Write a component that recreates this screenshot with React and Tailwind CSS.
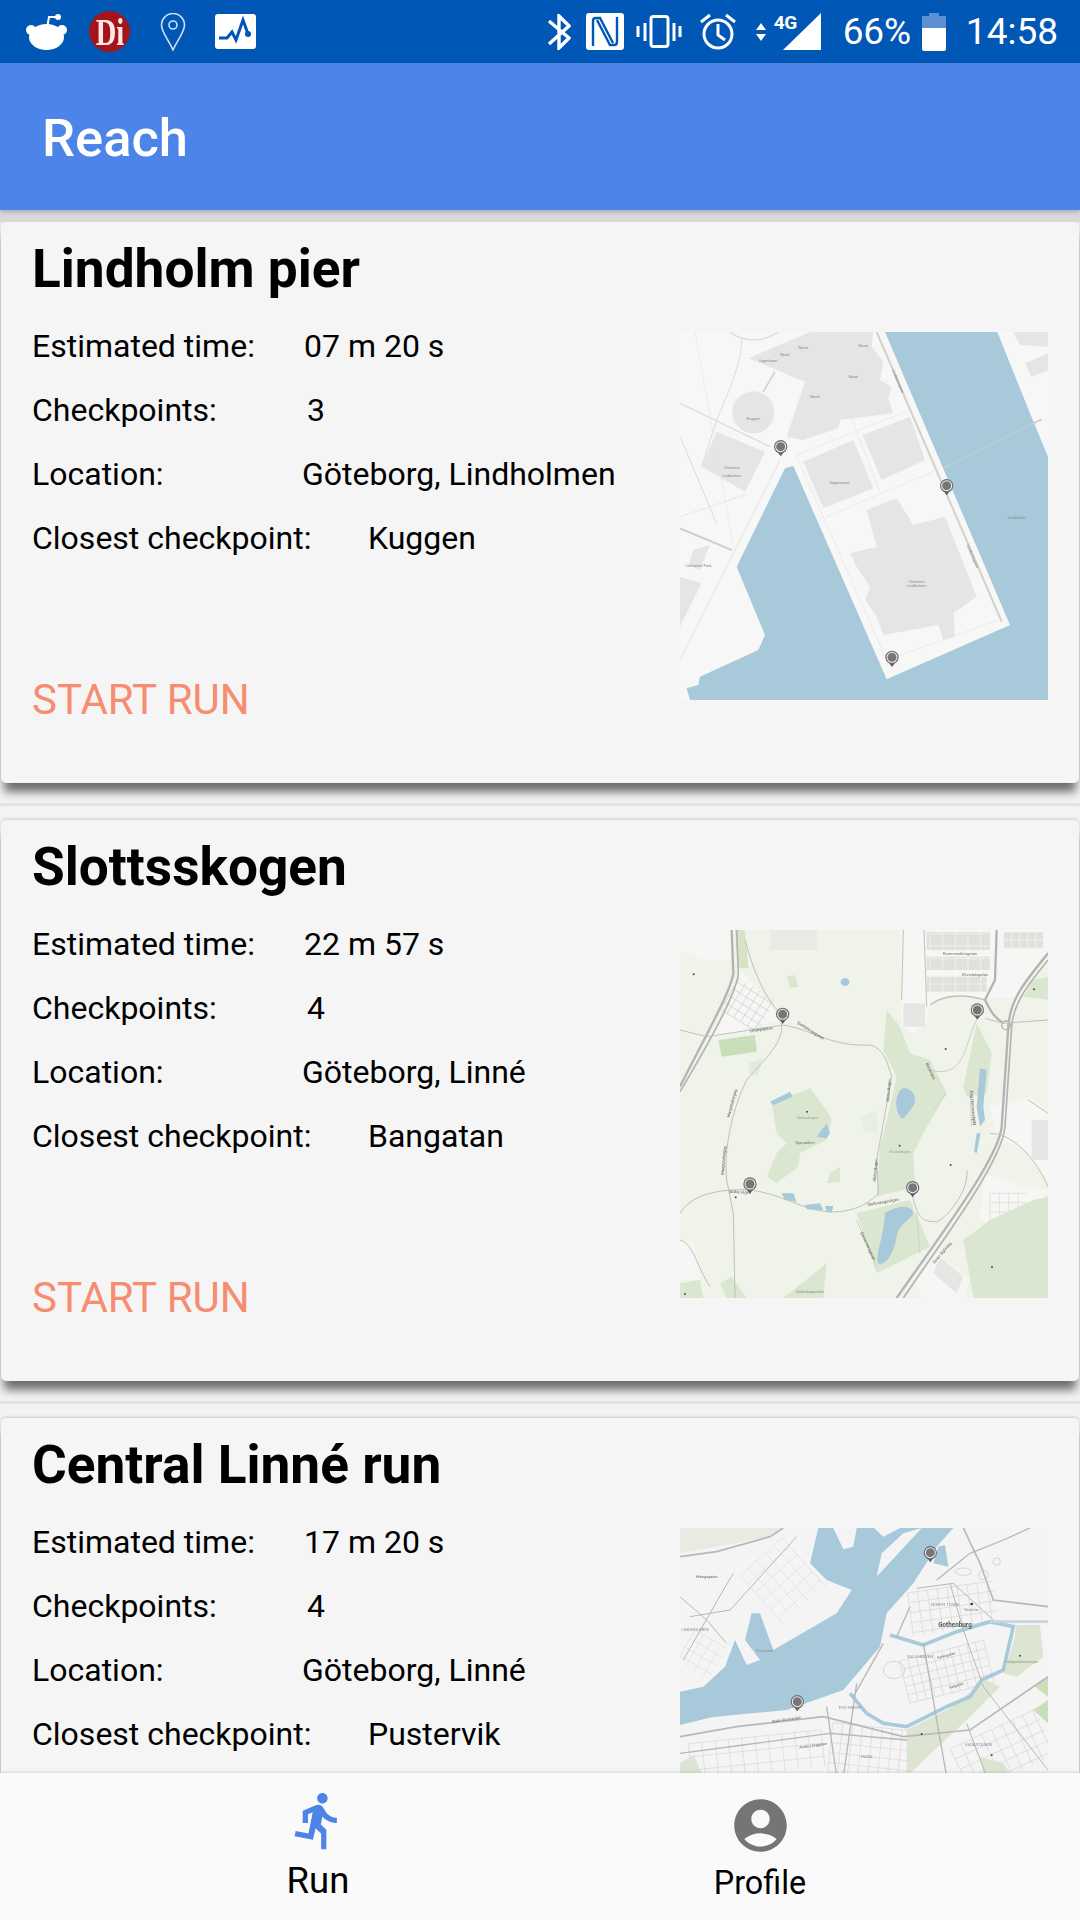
import { MdAccountCircle, MdDirectionsRun } from "react-icons/md";

const WATER = "#a7c9da";

const Pin = ({ x, y }) => (
  <g>
    <path d={`M${x - 9} ${y + 17} L${x} ${y + 29} L${x + 9} ${y + 17} Z`} fill="#5f5f5f" />
    <circle cx={x} cy={y} r="20" fill="#6b6b6b" />
    <circle cx={x} cy={y} r="16.5" fill="#efefef" />
    <circle cx={x} cy={y} r="13.5" fill="#767676" />
  </g>
);

const Label = ({ x, y, children, size = 15, color = "#8a8a8a", weight = 400, rotate = 0 }) => (
  <text
    x={x}
    y={y}
    fontSize={size}
    fill={color}
    fontWeight={weight}
    fontFamily="Roboto, sans-serif"
    textAnchor="middle"
    transform={rotate ? `rotate(${rotate} ${x} ${y})` : undefined}
  >
    {children}
  </text>
);

// street grid for the map thumbnails: two sets of parallel lines, turned as a block
const Streets = ({ x, y, w, h, step = 34, rotate = 0, color = "#d6d6d6" }) => {
  const lines = [];
  for (let i = 0; i <= w; i += step) lines.push(`M${x + i} ${y} V${y + h}`);
  for (let j = 0; j <= h; j += step) lines.push(`M${x} ${y + j} H${x + w}`);
  return (
    <path
      d={lines.join(" ")}
      fill="none"
      stroke={color}
      strokeWidth="2"
      transform={`rotate(${rotate} ${x + w / 2} ${y + h / 2})`}
    />
  );
};

const PierMap = () => (
  <svg viewBox="30 36 1104 1104" className="block w-[368px] h-[368px] blur-[0.3px]">
    <rect x="30" y="36" width="1104" height="1104" fill="#f7f7f7" />
    <path
      d="M645 36 L982 36 L1080 280 L1134 410 L1134 1140 L60 1140 L50 1105 L85 1095 L90 1070 L265 990 L285 945 L200 740 L345 445 L370 438 L650 1078 L1020 915 Z"
      fill={WATER}
    />
    <g fill="#e5e5e5">
      <path d="M235 115 L420 36 L610 36 L605 80 L640 125 L630 180 L665 200 L655 235 L670 280 L510 300 L505 325 L400 360 L350 350 L405 185 Z" />
      <circle cx="250" cy="277" r="63" />
      <path d="M140 335 L285 395 L225 515 L95 440 Z" />
      <path d="M400 425 L550 360 L610 505 L460 565 Z" />
      <path d="M578 345 L720 290 L765 420 L635 480 Z" />
      <path d="M590 570 L680 535 L730 615 L825 590 L920 830 L850 880 L855 950 L820 960 L805 915 L640 945 L620 890 L585 840 L600 800 L560 740 L540 700 L620 680 Z" />
      <path d="M1030 36 L1134 36 L1134 80 L1050 75 Z" />
      <path d="M1065 130 L1134 100 L1134 150 L1085 170 Z" />
      <path d="M30 770 L95 790 L30 920 Z" />
      <path d="M70 690 L120 675 L90 750 L55 735 Z" />
    </g>
    <g fill="none" stroke="#dcdcdc" strokeWidth="4">
      <path d="M30 250 L300 380" />
      <path d="M30 625 L185 690" strokeWidth="6" stroke="#cfcfcf" />
      <path d="M180 36 C230 75 290 60 325 36" />
      <path d="M215 60 C215 130 170 230 140 300 L95 440" strokeWidth="3" />
      <path d="M75 36 L190 680" strokeWidth="2" stroke="#e6e6e6" />
      <path d="M315 155 L280 215" strokeWidth="5" stroke="#d2d2d2" />
      <path d="M30 590 L225 525" stroke="#ebebeb" />
      <path d="M330 420 L30 1020" stroke="#e9e9e9" />
      <path d="M30 350 L140 610" strokeWidth="2" stroke="#cccccc" />
      <path d="M380 405 L720 270" stroke="#efefef" strokeWidth="5" />
      <path d="M470 590 L800 450" stroke="#efefef" strokeWidth="5" />
      <path d="M380 410 L650 1020 L985 900" strokeWidth="2" stroke="#e6e6e6" />
      <path d="M545 300 L630 515" stroke="#efefef" strokeWidth="5" />
    </g>
    <path d="M620 36 L995 905" stroke="#d3d1cc" strokeWidth="6" fill="none" />
    <path d="M820 445 L1115 298" stroke="#bdcdd4" strokeWidth="5" fill="none" />
    <Label x={250} y={300} size={12}>Kuggen</Label>
    <Label x={185} y={448} size={11}>Chalmers</Label>
    <Label x={185} y={470} size={11}>Lindholmen</Label>
    <Label x={508} y={492} size={12}>Saga huset</Label>
    <Label x={740} y={788} size={11}>Chalmers</Label>
    <Label x={740} y={802} size={11}>Lindholmen</Label>
    <Label x={85} y={742} size={12}>Container Park</Label>
    <Label x={1040} y={598} size={13}>Lindholm</Label>
    <Label x={400} y={88} size={11}>Navet</Label>
    <Label x={345} y={108} size={11}>Navet</Label>
    <Label x={295} y={125} size={11}>Lagerhuset</Label>
    <Label x={550} y={173} size={11}>Navet</Label>
    <Label x={435} y={233} size={11}>Navet</Label>
    <Label x={580} y={80} size={11}>Navet</Label>
    <Label x={680} y={185} size={11} color="#777777" rotate={67}>Lindholmspiren</Label>
    <Label x={905} y={710} size={11} color="#777777" rotate={67}>Lindholmspiren</Label>
    <Pin x={332} y={380} />
    <Pin x={830} y={497} />
    <Pin x={666} y={1012} />
  </svg>
);

const ParkMap = () => (
  <svg viewBox="30 30 1104 1104" className="block w-[368px] h-[368px] blur-[0.3px]">
    <rect x="30" y="30" width="1104" height="1104" fill="#f0f3ea" />
    <g fill="#f6f6f4">
      <path d="M690 30 L1134 30 L1134 90 L1040 230 L940 235 L840 225 L780 255 L770 310 L730 340 L695 320 Z" />
      <path d="M210 150 L280 230 L330 300 L130 350 Z" />
      <path d="M30 30 L190 30 L180 120 L100 120 L30 90 Z" />
      <path d="M940 760 L1060 800 L1134 810 L1090 930 L1030 935 L930 900 Z" />
      <path d="M960 560 L1080 530 L1134 580 L1134 780 L1060 690 L980 650 Z" />
      <path d="M30 960 L70 970 L95 1080 L30 1080 Z" />
      <path d="M800 1000 L900 1080 L880 1134 L760 1134 L735 1090 Z" />
    </g>
    <g fill="#dfe1dd">
      <path d="M770 36 H960 V90 H770 Z" />
      <path d="M770 110 H960 V150 H770 Z" />
      <path d="M770 170 H950 V215 H770 Z" />
      <path d="M1000 36 H1120 V85 H1000 Z" />
      <path d="M300 30 H440 V90 H300 Z" opacity="0.5" />
      <path d="M700 250 H765 V320 H700 Z" opacity="0.7" />
      <path d="M1085 600 H1134 V720 H1085 Z" opacity="0.7" />
      <path d="M810 1010 L880 1070 L860 1120 L790 1060 Z" opacity="0.7" />
    </g>
    <Streets x={780} y={40} w={180} h={180} step={38} color="#f7f7f7" />
    <Streets x={1000} y={36} w={130} h={50} step={24} color="#f7f7f7" />
    <Streets x={180} y={190} w={110} h={130} step={24} rotate={-58} color="#cfcfcf" />
    <Streets x={960} y={820} w={110} h={90} step={28} color="#d8d8d8" />
    <g fill="#dbe6d1">
      <path d="M305 550 L420 505 L470 570 L485 600 L470 660 L390 700 L385 740 L320 790 L290 770 L320 700 L350 670 L320 640 Z" />
      <path d="M650 270 L690 320 L720 400 L780 420 L830 520 L760 640 L730 700 L735 800 L620 830 L630 680 L660 560 L680 470 L640 390 Z" />
      <path d="M560 880 L720 840 L780 980 L620 1060 L600 1000 Z" />
      <path d="M920 310 L965 400 L950 520 L890 530 L880 500 Z" />
      <path d="M880 960 L960 900 L1090 840 L1134 830 L1134 1134 L910 1134 Z" />
      <path d="M340 1134 L470 1030 L460 1134 Z" />
      <path d="M30 1090 L90 1080 L100 1134 L30 1134 Z" />
      <path d="M150 1090 L185 1070 L230 1134 L170 1134 Z" />
      <path d="M480 760 L510 740 L510 785 L470 790 Z" />
      <path d="M350 170 L375 165 L385 200 L360 205 Z" />
      <path d="M1090 180 L1134 170 L1134 240 L1060 230 Z" />
      <path d="M235 430 L280 415 L265 465 L240 465 Z" opacity="0.6" />
      <path d="M570 590 L620 570 L625 640 L580 630 Z" opacity="0.3" />
    </g>
    <path d="M145 360 L255 345 L260 395 L155 410 Z" fill="#c9dfb9" />
    <path d="M195 30 L225 30 L235 145 L205 145 Z" fill="#d9e2c2" />
    <g fill={WATER}>
      <path d="M700 505 C735 505 745 545 725 565 C710 585 700 600 695 595 C670 570 675 515 700 505 Z" />
      <path d="M645 880 C670 860 725 850 730 880 C725 900 690 905 680 950 C670 1010 640 1040 625 1030 C615 1000 640 960 645 880 Z" />
      <path d="M930 445 L950 450 L940 560 L945 600 L930 620 L920 560 Z" />
      <path d="M920 640 L932 640 L920 700 L912 695 Z" />
      <path d="M300 545 L360 515 L368 530 L310 555 Z" />
      <path d="M440 650 L470 610 L480 640 L470 655 Z" />
      <path d="M335 820 L370 820 L380 845 L345 840 Z" />
      <path d="M405 855 L450 850 L460 870 L410 868 Z" />
      <path d="M465 858 L490 858 L485 878 L470 875 Z" />
      <ellipse cx="525" cy="186" rx="13" ry="12" />
    </g>
    <g fill="none" stroke="#b3b3b3">
      <path d="M185 30 L190 160 C180 220 100 360 30 500" strokeWidth="7" />
      <path d="M200 30 L205 165 C190 240 110 380 30 515" strokeWidth="5" />
      <path d="M1134 100 C1060 190 1020 240 1015 320 L995 620 C985 720 800 960 680 1134" strokeWidth="7" />
      <path d="M1134 120 C1070 200 1030 250 1025 320 L1005 620 C995 730 810 970 700 1134" strokeWidth="5" />
      <path d="M980 30 L975 180 L945 240 C960 270 970 290 1000 310" strokeWidth="7" />
      <circle cx="1008" cy="316" r="13" strokeWidth="4" />
    </g>
    <g fill="none" stroke="#bfc2bb" strokeWidth="3">
      <path d="M30 330 L110 350 L340 315 C430 330 480 380 600 375 C640 385 650 420 665 470 L620 720 L625 820 C590 860 530 880 470 875 C400 870 330 820 240 810 C130 805 60 830 30 880" />
      <path d="M335 310 C340 370 290 410 230 480 C190 560 160 680 170 780 L190 880 L195 1134" />
      <path d="M225 60 C250 150 280 230 335 285" />
      <path d="M780 255 C820 225 880 220 945 240" strokeWidth="4" />
      <path d="M945 295 L1000 310 L1134 300" />
      <path d="M728 830 C745 900 760 905 800 905 C840 890 900 800 890 750" />
      <path d="M30 960 C70 970 80 1040 120 1100" />
      <path d="M920 300 C885 360 890 480 780 450" stroke="#ccd0c8" />
      <path d="M960 640 C1020 640 1090 700 1134 800" />
      <path d="M1075 540 L1134 580" />
      <path d="M700 30 L695 240 M762 30 L770 260" />
      <path d="M900 510 L905 620 M830 520 L790 570" stroke="#d0d4cc" />
      <path d="M560 900 L620 1040 M740 880 L750 1000" stroke="#ccd0c8" />
    </g>
    <g fill="#4a4a4a">
      <circle cx="71" cy="163" r="3" />
      <circle cx="411" cy="575" r="3" />
      <circle cx="689" cy="677" r="3" />
      <circle cx="842" cy="735" r="3" />
      <circle cx="197" cy="832" r="3" />
      <circle cx="966" cy="1041" r="3" />
      <circle cx="1092" cy="208" r="3" />
      <circle cx="827" cy="387" r="3" />
      <circle cx="45" cy="1122" r="3" />
    </g>
    <Label x={412} y={597} size={11} color="#9aa596">Slottsskogen</Label>
    <Label x={405} y={672} size={12} color="#6f746c">Djurparken</Label>
    <Label x={690} y={698} size={11} color="#9aa596">Slottsskogen</Label>
    <Label x={870} y={104} size={12} color="#6f6f6f">Kommendörsgatan</Label>
    <Label x={915} y={168} size={12} color="#6f6f6f">Olivedalsgatan</Label>
    <Label x={275} y={332} size={12} color="#555555" rotate={-8}>Linnéplatsen</Label>
    <Label x={420} y={335} size={12} color="#555555" rotate={32}>Slottsskogsgatan</Label>
    <Label x={190} y={550} size={12} color="#555555" rotate={-75}>Margretebergsg.</Label>
    <Label x={165} y={720} size={12} color="#555555" rotate={-85}>Margretebergsg.</Label>
    <Label x={210} y={820} size={12} color="#555555" rotate={2}>Södra vägen</Label>
    <Label x={640} y={850} size={12} color="#555555" rotate={-10}>Slottsskogsvägen</Label>
    <Label x={660} y={510} size={12} color="#555555" rotate={-85}>Slottsskogsv.</Label>
    <Label x={620} y={750} size={12} color="#555555" rotate={-85}>Slottsskogsv.</Label>
    <Label x={778} y={455} size={12} color="#555555" rotate={65}>Botaniska</Label>
    <Label x={905} y={565} size={12} color="#555555" rotate={85}>Dag Hammarskjöld</Label>
    <Label x={820} y={1000} size={12} color="#555555" rotate={-50}>Sankt Sigfridsg.</Label>
    <Label x={590} y={980} size={12} color="#555555" rotate={65}>Dalheimersgatan</Label>
    <Label x={420} y={1120} size={11} color="#8a9186">Slottsskogsvallen</Label>
    <Pin x={338} y={283} />
    <Pin x={922} y={270} />
    <Pin x={240} y={792} />
    <Pin x={728} y={803} />
  </svg>
);

const CityMap = () => (
  <svg viewBox="30 54 1104 1104" className="block w-[368px] h-[368px] blur-[0.3px]">
    <rect x="30" y="54" width="1104" height="1104" fill="#f4f4f4" />
    <path d="M30 54 L340 54 L280 85 L30 130 Z" fill="#e9ebe3" />
    <Streets x={720} y={230} w={260} h={130} step={30} rotate={-8} />
    <Streets x={700} y={420} w={260} h={130} step={26} rotate={-14} />
    <Streets x={480} y={650} w={240} h={150} step={30} rotate={6} />
    <Streets x={860} y={650} w={280} h={150} step={34} rotate={-25} />
    <Streets x={240} y={130} w={200} h={170} step={34} rotate={48} color="#e0e0e0" />
    <Streets x={40} y={380} w={110} h={110} step={30} rotate={30} color="#e0e0e0" />
    <Streets x={60} y={680} w={400} h={110} step={40} rotate={-6} />
    <path
      d="M445 54 L420 160 L470 210 L545 240 L500 310 L310 420 L270 310 L245 310 L225 390 L270 450 L230 465 L195 390 L165 470 L100 530 L30 545 L30 645 L125 622 L350 600 L520 540 L630 410 L650 310 L730 220 L800 110 L850 54 Z"
      fill={WATER}
    />
    <g fill="#f4f4f4">
      <path d="M490 54 L560 54 L550 110 L520 118 Z" />
      <path d="M612 54 L690 54 L640 80 Z" />
      <path d="M755 54 L620 200 L635 130 L700 70 Z" />
    </g>
    <path d="M805 110 L825 105 L835 170 L790 160 Z" fill={WATER} />
    <g fill="#dbe5d1">
      <path d="M1030 400 L1040 345 L1110 345 L1120 440 L1040 500 L1000 490 Z" />
      <path d="M710 660 L830 600 L950 510 L990 530 L890 630 L730 780 L710 800 Z" />
      <path d="M930 740 L1000 760 L1020 790 L940 790 Z" />
      <path d="M30 760 L70 735 L100 800 L30 800 Z" />
    </g>
    <path d="M1134 500 L1134 560 L1095 530 Z" fill="#c9dfb9" />
    <path d="M1134 570 L1134 640 L1090 600 Z" fill="#c9dfb9" />
    <path
      d="M540 550 L590 610 L640 640 L710 650 L830 590 L900 560 L935 510 L1000 480 L1030 350 L960 335 L860 365 L760 405 L660 375"
      fill="none"
      stroke="#a8cadb"
      strokeWidth="11"
    />
    <path d="M960 335 L1134 335" fill="none" stroke="#c5d6dd" strokeWidth="8" />
    <g fill="none" stroke="#b8b8b8" strokeWidth="3">
      <path d="M30 680 L200 650 L460 620 L700 680 L900 660 L1134 500" strokeWidth="5" />
      <path d="M30 730 L220 705 L480 670 L710 690" strokeWidth="4" />
      <path d="M880 54 L930 160 L970 270 L1134 290" strokeWidth="5" />
      <path d="M800 210 L900 130 L1000 90 L1080 54" strokeWidth="4" />
      <path d="M470 590 L500 800 M560 520 L520 800 M640 400 L550 560" strokeWidth="4" />
      <path d="M30 140 L140 125 L300 80 L340 54" strokeWidth="5" />
      <path d="M60 320 L180 300 L380 80" />
      <path d="M40 450 L160 240 L190 190" />
      <path d="M30 260 L110 330 L170 400" />
      <path d="M740 235 L850 220 L970 330" />
      <path d="M840 220 L880 360 L940 530 L1134 780" />
      <path d="M720 290 L680 380" strokeWidth="4" />
      <path d="M760 400 L830 800" strokeWidth="4" />
      <path d="M890 640 L950 800" />
    </g>
    <g fill="none" stroke="#c4c4c4" strokeWidth="2">
      <circle cx="940" cy="195" r="14" />
      <ellipse cx="880" cy="185" rx="24" ry="11" />
      <circle cx="980" cy="155" r="11" />
      <ellipse cx="672" cy="480" rx="32" ry="26" />
    </g>
    <Label x={855} y={352} size={19} color="#5a5a5a" weight={700}>Gothenburg</Label>
    <Label x={825} y={288} size={13} color="#8e8ea2">NORTH TOWN</Label>
    <Label x={905} y={302} size={11}>Nordstan</Label>
    <Label x={540} y={598} size={13} color="#8e8ea2">PUSTERVIK</Label>
    <Label x={590} y={745} size={13} color="#8e8ea2">HAGA</Label>
    <Label x={75} y={364} size={13} color="#8e8ea2">LINDHOLMEN</Label>
    <Label x={750} y={445} size={13} color="#8e8ea2">VALLGRAVEN</Label>
    <Label x={925} y={708} size={13} color="#8e8ea2">VASASTADEN</Label>
    <Label x={1055} y={460} size={11} color="#8f9a8a">Trädgårdsföreningen</Label>
    <Label x={110} y={204} size={11} color="#5f5f5f">Hisingsgatan</Label>
    <Label x={350} y={632} size={11} color="#5f5f5f" rotate={-8}>Södra Älvstranden</Label>
    <Label x={430} y={710} size={11} color="#5f5f5f" rotate={-8}>Andra Långgatan</Label>
    <Label x={860} y={530} size={11} color="#5f5f5f" rotate={-18}>Vallgatan</Label>
    <Label x={830} y={440} size={11} color="#5f5f5f" rotate={-15}>Kyrkogatan</Label>
    <Label x={285} y={425} size={11}>Frihamnen</Label>
    <circle cx="905" cy="282" r="4" fill="#333333" />
    <circle cx="1050" cy="437" r="3" fill="#444444" />
    <circle cx="755" cy="672" r="3" fill="#444444" />
    <circle cx="965" cy="735" r="3" fill="#444444" />
    <Pin x={781} y={128} />
    <Pin x={382} y={575} />
  </svg>
);

const RUNS = [
  {
    name: "Lindholm pier",
    time: "07 m 20 s",
    checkpoints: "3",
    location: "Göteborg, Lindholmen",
    closest: "Kuggen",
    Map: PierMap,
  },
  {
    name: "Slottsskogen",
    time: "22 m 57 s",
    checkpoints: "4",
    location: "Göteborg, Linné",
    closest: "Bangatan",
    Map: ParkMap,
  },
  {
    name: "Central Linné run",
    time: "17 m 20 s",
    checkpoints: "4",
    location: "Göteborg, Linné",
    closest: "Pustervik",
    Map: CityMap,
  },
];

const InfoRow = ({ label, value, labelWidth }) => (
  <div className="flex items-center h-[64px] text-[32px] text-black">
    <span className={labelWidth}>{label}</span>
    <span>{value}</span>
  </div>
);

const RunCard = ({ run }) => {
  const RunMap = run.Map;
  return (
    <section className="shrink-0 h-[598px]">
      <div className="relative h-[561px] mx-[1px] rounded-[5px] bg-[#f5f5f5] pl-[31px] pr-[31px] pt-[15px] shadow-[0_12px_10px_-3px_rgba(0,0,0,0.55),0_-1px_3px_rgba(0,0,0,0.16)]">
        <h2 className="text-[53.2px] leading-[64px] font-bold text-black">{run.name}</h2>
        <div className="flex justify-between mt-[13px]">
          <div>
            <InfoRow label="Estimated time:" value={run.time} labelWidth="w-[272px]" />
            <InfoRow label="Checkpoints:" value={run.checkpoints} labelWidth="w-[275px]" />
            <InfoRow label="Location:" value={run.location} labelWidth="w-[270px]" />
            <InfoRow label="Closest checkpoint:" value={run.closest} labelWidth="w-[336px]" />
            <p className="mt-[105px] text-[42px] leading-[50px] text-[#f78d70]">START RUN</p>
          </div>
          <div className="mt-[18px]">
            <RunMap />
          </div>
        </div>
      </div>
      <div className="h-[3px] mt-[20px] bg-[#e3e3e3]" />
    </section>
  );
};

const StatusBar = () => (
  <div className="flex items-center justify-between h-[63px] shrink-0 bg-[#0057b5] pl-[26px] pr-[22px] text-white">
    <div className="flex items-center">
      <svg viewBox="0 0 41 36" className="w-[41px] h-[36px]">
        <path d="M21 14 L23 3 H30" stroke="#fff" strokeWidth="2" fill="none" />
        <circle cx="32" cy="3" r="3" fill="#fff" />
        <circle cx="5" cy="16" r="5" fill="#fff" />
        <circle cx="36" cy="16" r="5" fill="#fff" />
        <ellipse cx="20.5" cy="23" rx="17.5" ry="13" fill="#fff" />
      </svg>
      <div className="flex items-center justify-center w-[41px] h-[41px] ml-[22px] rounded-full bg-[#a5141a] text-[#fde9e4] font-['Liberation_Serif',serif] font-bold text-[38px] leading-none overflow-hidden">
        <span className="scale-x-75">Di</span>
      </div>
      <svg viewBox="0 0 26 38" className="w-[26px] h-[38px] ml-[30px]" fill="none" stroke="#cfe0f5" strokeWidth="1.6">
        <path d="M13 37 C8 26 1.5 19 1.5 12 A11.5 11.5 0 0 1 24.5 12 C24.5 19 18 26 13 37 Z" />
        <circle cx="13" cy="12" r="4" />
      </svg>
      <svg viewBox="0 0 41 35" className="w-[41px] h-[35px] ml-[29px]">
        <rect width="41" height="35" rx="3" fill="#fff" />
        <path d="M4 24 H12 L17 18 L21 26 L28 6 L33 20" fill="none" stroke="#0057b5" strokeWidth="3" />
        <circle cx="33" cy="20" r="3" fill="#0057b5" />
      </svg>
    </div>
    <div className="flex items-center">
      <svg viewBox="0 0 24 36" className="w-[24px] h-[36px]" fill="none" stroke="#fff" strokeWidth="3.4">
        <path d="M2 7 L22 24 L12 34 V2 L22 12 L2 30" />
      </svg>
      <svg viewBox="0 0 38 37" className="w-[38px] h-[37px] ml-[15px]">
        <rect width="38" height="37" rx="3" fill="#fff" />
        <path d="M7 33 V8 Q7 5 10 5 H14 L27 30 M31 4 V29 Q31 32 28 32 H24 L11 7" fill="none" stroke="#0057b5" strokeWidth="2.4" />
      </svg>
      <svg viewBox="0 0 46 33" className="w-[46px] h-[33px] ml-[12px]" fill="none" stroke="#fff" strokeWidth="3">
        <rect x="15" y="1.5" width="17" height="30" rx="2.5" />
        <path d="M9 8 V26 M2 11 V22 M38 8 V26 M44 11 V22" />
      </svg>
      <svg viewBox="0 0 36 37" className="w-[36px] h-[37px] ml-[18px]" fill="none" stroke="#fff" strokeWidth="3">
        <circle cx="18" cy="21" r="14" />
        <path d="M18 11 V22 L25 27 M1 9 L10 2 M35 9 L26 2" />
      </svg>
      <svg viewBox="0 0 10 18" className="w-[10px] h-[18px] ml-[20px]" fill="#fff">
        <path d="M5 0 L10 7 H0 Z M5 18 L0 11 H10 Z" />
      </svg>
      <div className="relative w-[47px] h-[37px] ml-[8px]">
        <svg viewBox="0 0 38 37" className="absolute right-0 top-0 w-[38px] h-[37px]" fill="#fff">
          <path d="M38 0 V37 H0 Z" />
        </svg>
        <span className="absolute left-0 top-[0px] text-[19px] leading-[20px] font-bold tracking-[-0.5px]">
          4G
        </span>
      </div>
      <span className="ml-[22px] text-[37px] leading-none tracking-[-0.2px]">66%</span>
      <svg viewBox="0 0 24 38" className="w-[24px] h-[38px] ml-[11px]">
        <path d="M7 0 H17 V3 H24 V15 H0 V3 H7 Z" fill="#5c90d2" />
        <path d="M0 15 H24 V36 A2 2 0 0 1 22 38 H2 A2 2 0 0 1 0 36 Z" fill="#fff" />
      </svg>
      <span className="ml-[20px] text-[37px] leading-none">14:58</span>
    </div>
  </div>
);

const App = () => {
  return (
    <div className="flex flex-col w-[1080px] h-[1920px] overflow-hidden bg-[#f3f3f3] font-['Roboto',sans-serif]">
      <StatusBar />
      <header className="relative z-10 flex items-center h-[147px] shrink-0 bg-[#4c84e8] pl-[42px] pt-[4px] shadow-[0_2px_4px_rgba(0,0,0,0.2)]">
        <h1 className="text-[52.5px] font-medium text-white">Reach</h1>
      </header>
      <div className="h-[12px] shrink-0 bg-[#dad8da]" />
      <main className="flex-1 min-h-0 overflow-hidden">
        {RUNS.map((run) => (
          <RunCard key={run.name} run={run} />
        ))}
      </main>
      <nav className="relative z-10 flex h-[147px] shrink-0 bg-[#fafafa] shadow-[0_-1px_3px_rgba(0,0,0,0.12)]">
        <div className="flex flex-col items-center w-[636px] pt-[16px] text-black">
          <MdDirectionsRun className="w-[63px] h-[63px] text-[#4c84e8]" />
          <span className="text-[36.5px] leading-[44px] mt-[7px]">Run</span>
        </div>
        <div className="flex flex-col items-center w-[248px] pt-[21px] text-black">
          <MdAccountCircle className="w-[63px] h-[63px] text-[#757575]" />
          <span className="text-[32.3px] leading-[40px] mt-[6px]">Profile</span>
        </div>
      </nav>
    </div>
  );
};

export default App;
